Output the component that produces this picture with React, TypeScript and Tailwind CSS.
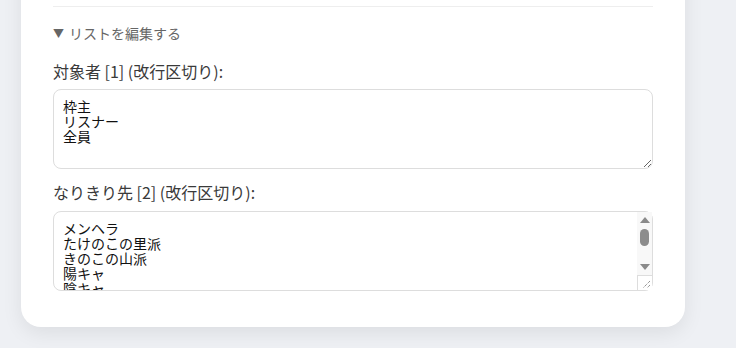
import React from "react";

const FONT = { fontFamily: '"Noto Sans CJK JP", "Noto Sans", sans-serif' };

const targets = ["枠主", "リスナー", "全員"].join("\n");
const roles = ["メンヘラ", "たけのこの里派", "きのこの山派", "陽キャ", "陰キャ", "オタク", "ギャル"].join("\n");

const areaClass =
  "h-[80px] w-full rounded-[8px] border border-[#dddddd] px-[9px] py-[9px] text-[14px] leading-[15px] text-[#111] outline-none";

function FakeScrollbar() {
  return (
    <div className="absolute right-px top-px bottom-px flex w-[15px] flex-col rounded-tr-[7px]">
      <div className="flex flex-1 flex-col items-center bg-[#f8f8f8] pt-[5px]">
        <div className="h-0 w-0 border-x-[5px] border-b-[6px] border-x-transparent border-b-[#8a8a8a]" />
        <div className="mt-[6px] h-[17px] w-[9px] rounded-full bg-[#8c8c8c]" />
        <div className="flex-1" />
        <div className="mb-[5px] h-0 w-0 border-x-[5px] border-t-[6px] border-x-transparent border-t-[#8a8a8a]" />
      </div>
      <div className="flex h-[15px] items-end justify-end border-l border-t border-[#dddddd] bg-white">
        <svg width="10" height="10" viewBox="0 0 10 10" className="mb-[1px] mr-[1px]">
          <path d="M9 2 L2 9 M9 6 L6 9" stroke="#555" strokeWidth="0.9" strokeDasharray="1 1" />
        </svg>
      </div>
    </div>
  );
}

export default function App() {
  return (
    <div
      className="min-h-[348px] w-[736px] overflow-hidden bg-[#eef0f4] pb-[21px]"
      style={FONT}
    >
      <div className="-mt-[30px] ml-[21px] w-[664px] rounded-b-[20px] bg-white px-8 pb-[36px] pt-[36px] shadow-[0_6px_20px_rgba(0,0,0,0.08)]">
        <div className="border-t border-[#eeeeee]" />
        <details open className="mt-[16px]">
          <summary className="flex h-5 cursor-pointer list-none items-center text-[14px] leading-5 text-[#666]">
            <span className="mr-[5px] text-[11px]">▼</span>
            リストを編集する
          </summary>
          <div className="mt-[17px] flex flex-col">
            <label className="text-[16px] leading-[22px] text-[#3a3a3a]">対象者 [1] (改行区切り):</label>
            <textarea defaultValue={targets} className={`mt-[7px] ${areaClass}`} style={FONT} />
            <label className="mt-[12px] text-[16px] leading-[22px] text-[#3a3a3a]">なりきり先 [2] (改行区切り):</label>
            <div className="relative mt-[8px]">
              <textarea
                defaultValue={roles}
                className={`block resize-none overflow-hidden ${areaClass}`}
                style={FONT}
              />
              <FakeScrollbar />
            </div>
          </div>
        </details>
      </div>
    </div>
  );
}
